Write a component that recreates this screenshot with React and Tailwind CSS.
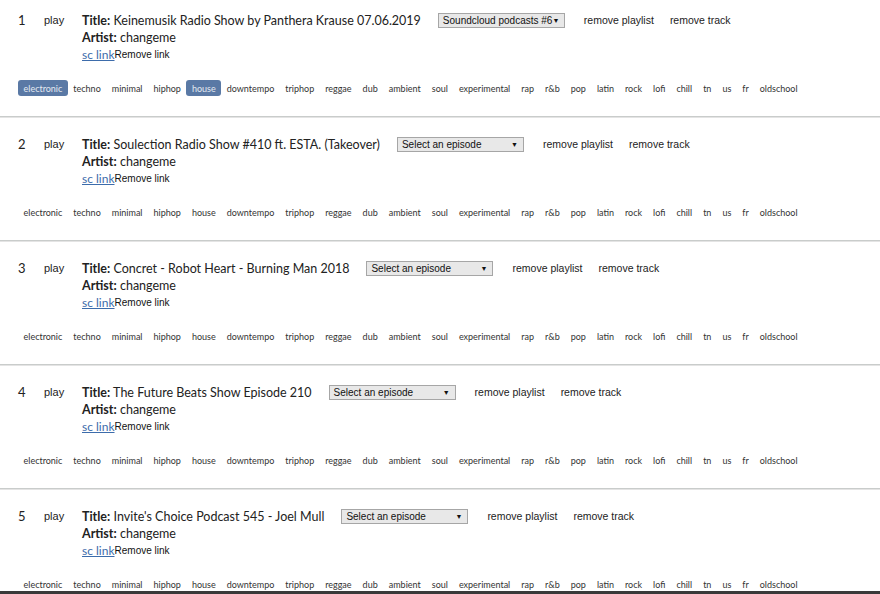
import React from "react";

const TAGS = [
  "electronic", "techno", "minimal", "hiphop", "house", "downtempo", "triphop",
  "reggae", "dub", "ambient", "soul", "experimental", "rap", "r&b", "pop",
  "latin", "rock", "lofi", "chill", "tn", "us", "fr", "oldschool",
];

const TRACKS = [
  { title: "Keinemusik Radio Show by Panthera Krause 07.06.2019", playlist: "Soundcloud podcasts #6", tags: ["electronic", "house"] },
  { title: "Soulection Radio Show #410 ft. ESTA. (Takeover)", playlist: "Select an episode", tags: [] },
  { title: "Concret - Robot Heart - Burning Man 2018", playlist: "Select an episode", tags: [] },
  { title: "The Future Beats Show Episode 210", playlist: "Select an episode", tags: [] },
  { title: "Invite's Choice Podcast 545 - Joel Mull", playlist: "Select an episode", tags: [] },
];

const Track = ({ track, index }) => {
  return (
    <div className="pt-[12px]">
      <div className="flex items-start pl-[18px]">
        <span className="w-[26px] text-[13px] leading-[17px] text-[#222]">{index + 1}</span>
        <button className="w-[38px] text-left text-[11px] leading-[17px] text-[#222] font-['Liberation_Sans',sans-serif]">
          play
        </button>
        <div className="flex flex-col">
          <div className="flex items-center h-[17px]">
            <span className="text-[12.5px] leading-[17px] text-[#222] whitespace-nowrap">
              <b className="font-bold">Title:</b> {track.title}
            </span>
            <div className="ml-[17px] w-[127px] h-[15px] flex items-center justify-between border border-[#a6a6a6] bg-[#e8e8e8] pl-[4px] pr-[5px] text-[10px] text-[#111] font-['Liberation_Sans',sans-serif] whitespace-nowrap">
              <span className="leading-none">{track.playlist}</span>
              <span className="text-[7px] leading-none">▼</span>
            </div>
            <button className="ml-[19px] text-[10.5px] text-[#222] font-['Liberation_Sans',sans-serif] whitespace-nowrap">remove playlist</button>
            <button className="ml-[16px] text-[10.5px] text-[#222] font-['Liberation_Sans',sans-serif] whitespace-nowrap">remove track</button>
          </div>
          <div className="text-[12.5px] leading-[17px] text-[#222]">
            <b className="font-bold">Artist:</b> changeme
          </div>
          <div className="h-[17px] flex items-center">
            <a href="#" className="text-[12px] leading-none text-[#3d6cab] underline">sc link</a>
            <button className="text-[10px] leading-none text-[#111] font-['Liberation_Sans',sans-serif]">Remove link</button>
          </div>
        </div>
      </div>
      <div className="mt-[17px] pl-[18px] flex items-center">
        {TAGS.map((tag) => {
          const on = track.tags.includes(tag);
          return (
            <span
              key={tag}
              className={`h-[16px] px-[5.5px] flex items-center rounded-[3px] text-[9px] leading-none ${on ? "bg-[#5a79a5] text-[#e4e9f1]" : "text-[#333]"}`}
            >
              {tag}
            </span>
          );
        })}
      </div>
      <div className="mt-[20px] mb-[6px] border-t border-[#c9cccb] border-b border-b-[#e4e4e4]" />
    </div>
  );
};

export default function App() {
  return (
    <div className="h-[594px] w-[880px] flex flex-col bg-white font-['Lato',sans-serif]">
      <div className="flex-1 overflow-hidden">
        {TRACKS.map((t, i) => (
          <Track key={i} track={t} index={i} />
        ))}
      </div>
      <div className="h-[3px] bg-[#3a3a3a]" />
    </div>
  );
}
